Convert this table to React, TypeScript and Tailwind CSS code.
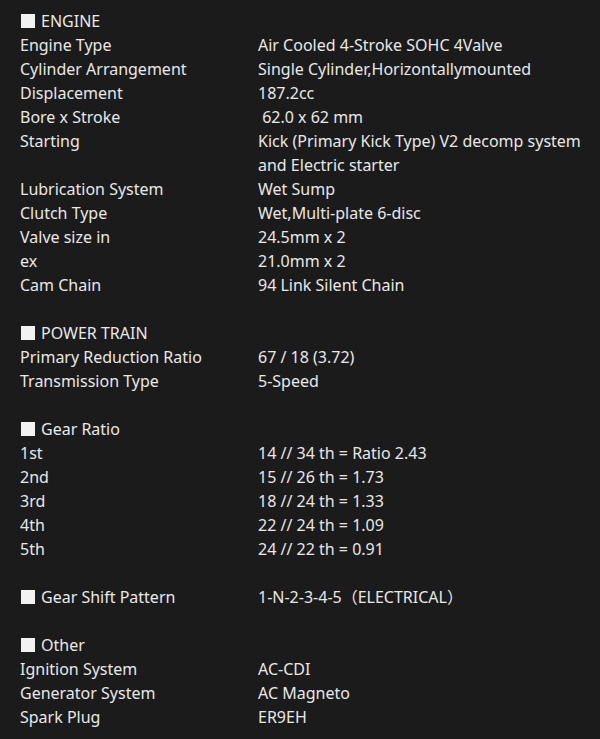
import React from "react";

type Row = [React.ReactNode, React.ReactNode] | null;

const Sq = ({ children }: { children: string }) => (
  <>
    <span className="inline-block w-[14px] h-[14px] bg-[#f2f2f2] ml-[1px] mr-[6px] align-[-1px]" />
    {children}
  </>
);

const rows: Row[] = [
  [<Sq>ENGINE</Sq>, ""],
  ["Engine Type", "Air Cooled 4-Stroke SOHC 4Valve"],
  ["Cylinder Arrangement", "Single Cylinder,Horizontallymounted"],
  ["Displacement", "187.2cc"],
  ["Bore x Stroke", "\u00a062.0 x 62 mm"],
  ["Starting", "Kick (Primary Kick Type) V2 decomp system"],
  ["", "and Electric starter"],
  ["Lubrication System", "Wet Sump"],
  ["Clutch Type", "Wet,Multi-plate 6-disc"],
  ["Valve size in", "24.5mm x 2"],
  ["ex", "21.0mm x 2"],
  ["Cam Chain", "94 Link Silent Chain"],
  null,
  [<Sq>POWER TRAIN</Sq>, ""],
  ["Primary Reduction Ratio", "67 / 18 (3.72)"],
  ["Transmission Type", "5-Speed"],
  null,
  [<Sq>Gear Ratio</Sq>, ""],
  ["1st", "14 // 34 th = Ratio 2.43"],
  ["2nd", "15 // 26 th = 1.73"],
  ["3rd", "18 // 24 th = 1.33"],
  ["4th", "22 // 24 th = 1.09"],
  ["5th", "24 // 22 th = 0.91"],
  null,
  [<Sq>Gear Shift Pattern</Sq>, "1-N-2-3-4-5（ELECTRICAL）"],
  null,
  [<Sq>Other</Sq>, ""],
  ["Ignition System", "AC-CDI"],
  ["Generator System", "AC Magneto"],
  ["Spark Plug", "ER9EH"],
];

export default function App() {
  return (
    <div
      className="w-[600px] min-h-[739px] bg-[#1b1b1b] text-[#e8e8e8] pt-[9px] pb-[10px] pl-[20px] pr-[14px] text-[16px] leading-[24px]"
      style={{ fontFamily: '"Noto Sans", "Noto Sans CJK JP", sans-serif' }}
    >
      {rows.map((r, i) =>
        r === null ? (
          <div key={i} className="h-[24px]" />
        ) : (
          <div key={i} className="flex h-[24px]">
            <div className="w-[238px] shrink-0 whitespace-nowrap">{r[0]}</div>
            <div className="flex-1 whitespace-nowrap">{r[1]}</div>
          </div>
        )
      )}
    </div>
  );
}
